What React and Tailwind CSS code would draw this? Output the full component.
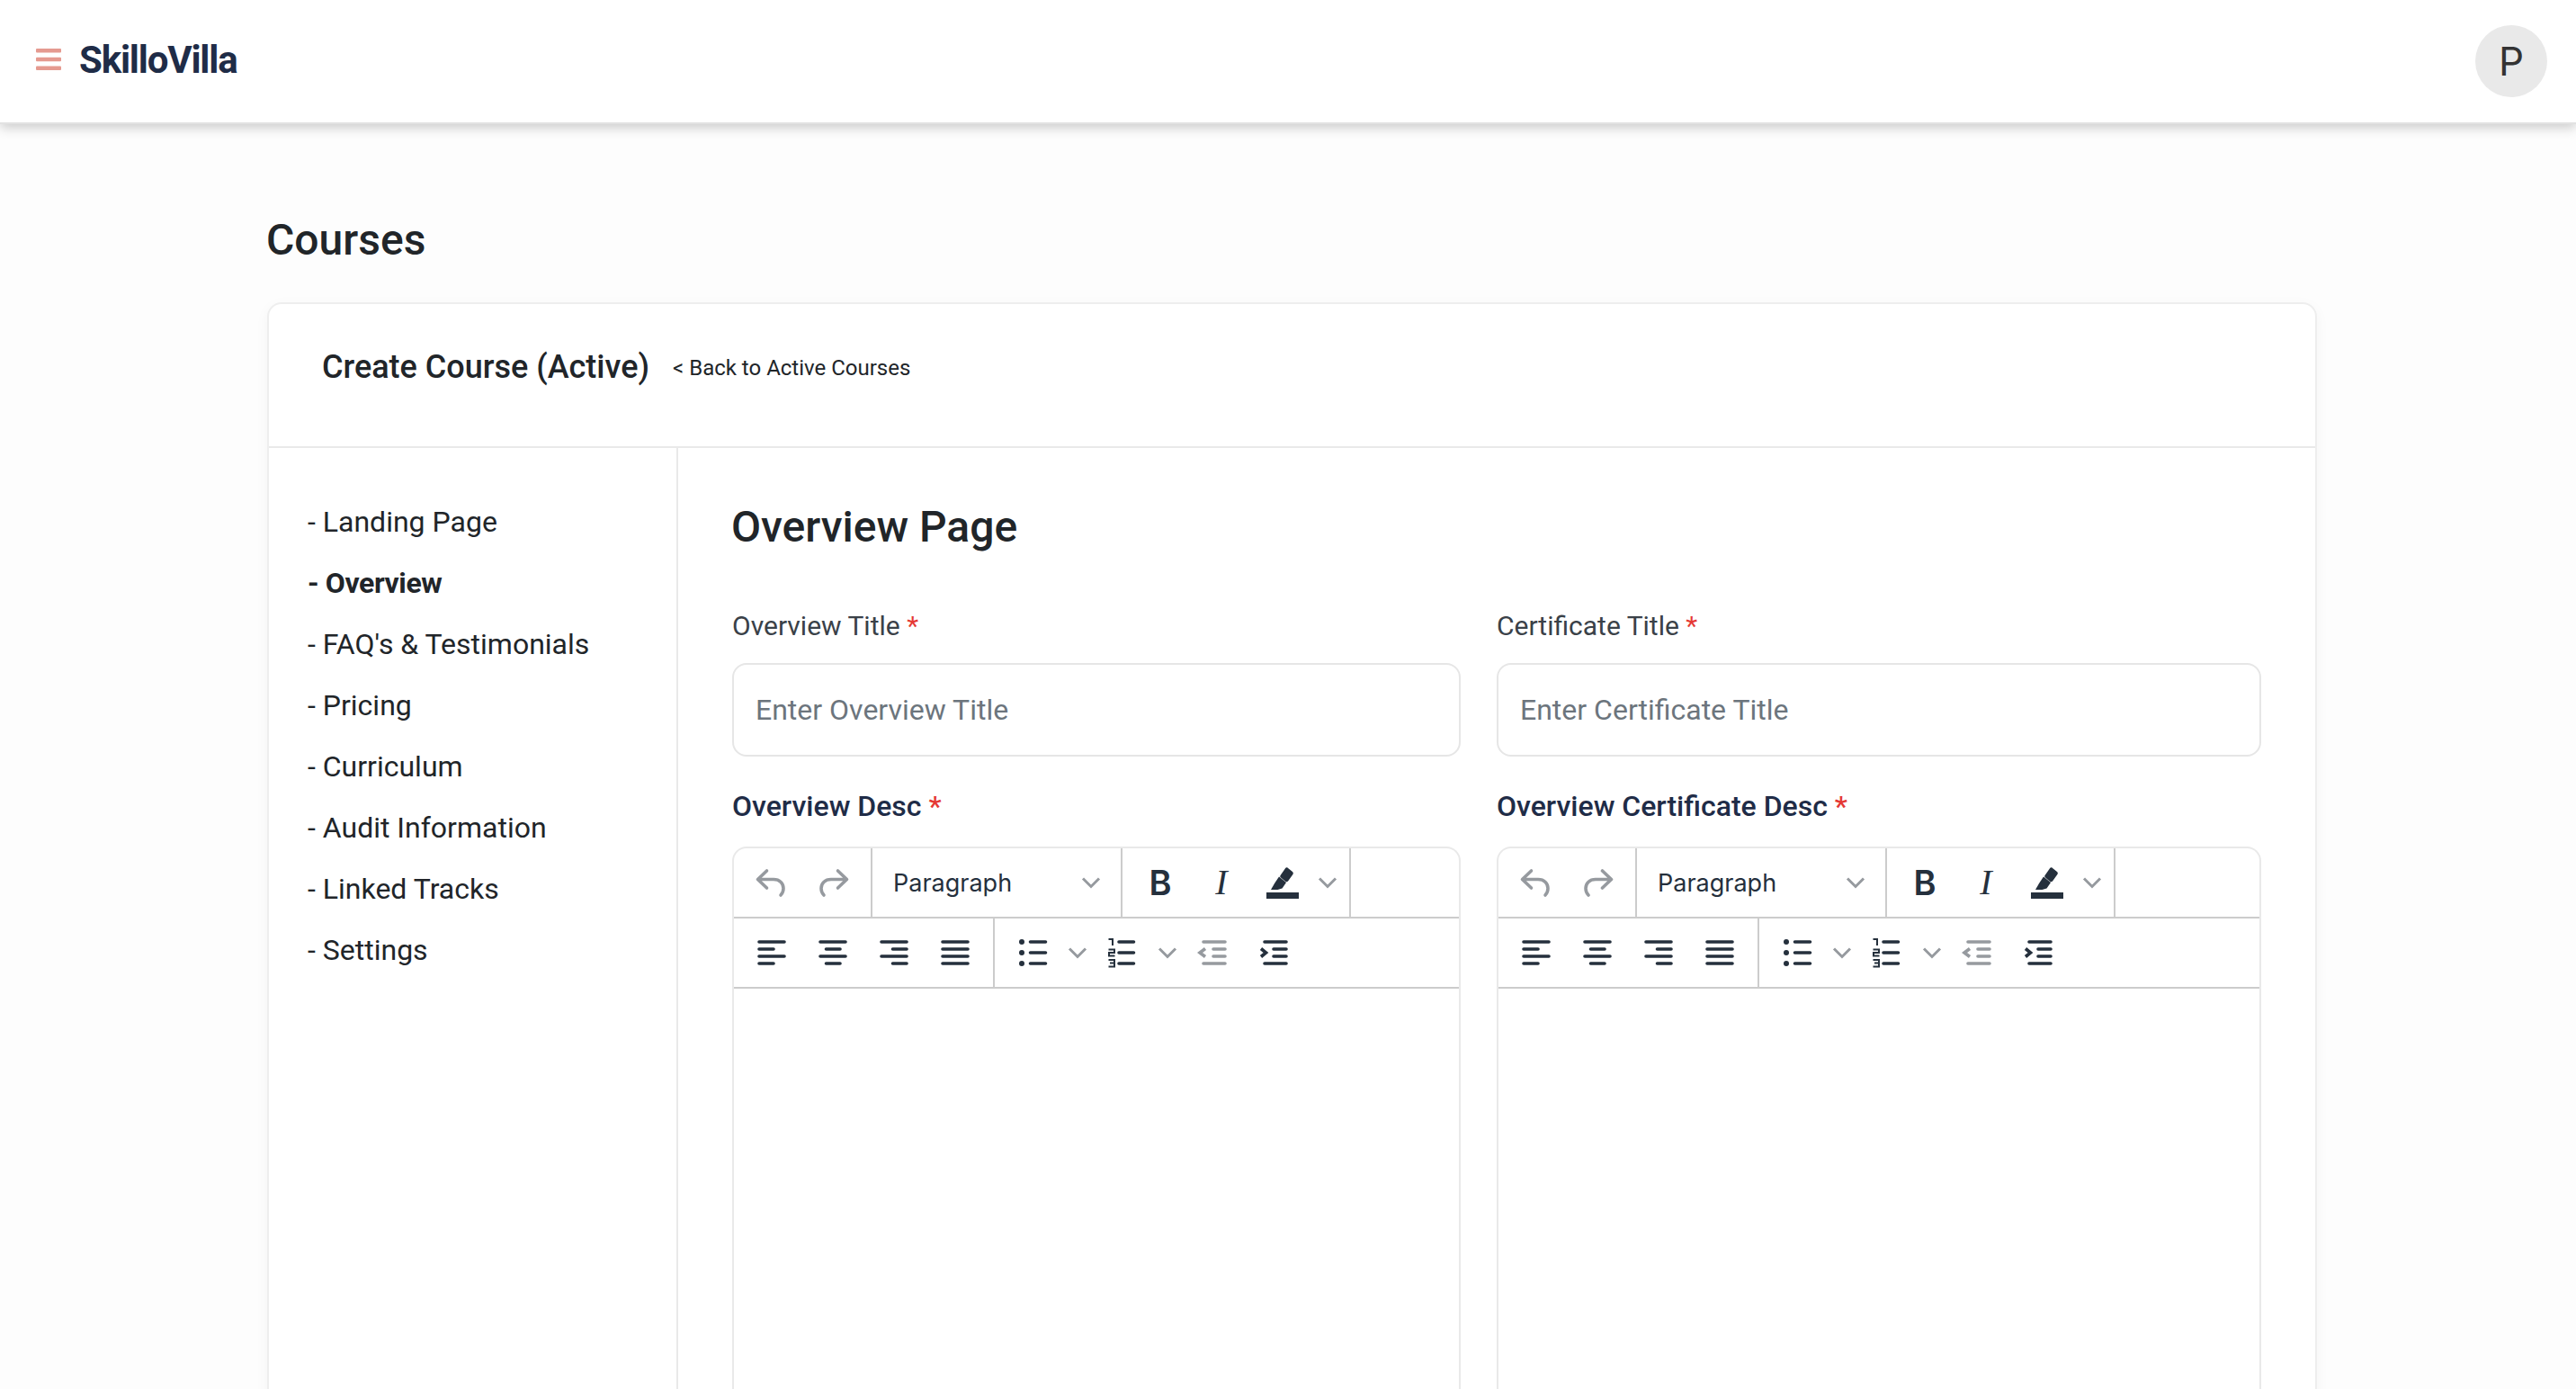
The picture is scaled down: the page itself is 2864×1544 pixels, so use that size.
import React from 'react';

const navItems = ['- Landing Page', '- Overview', "- FAQ's & Testimonials", '- Pricing', '- Curriculum', '- Audit Information', '- Linked Tracks', '- Settings'];

const Chevron = () => (
    <svg width="22" height="14" viewBox="0 0 22 14" fill="none" stroke="#969a9f" strokeWidth="3">
        <path d="M2 2.5l9 9 9-9" />
    </svg>
);

const Bars = ({ lines, color = '#25303d' }) => (
    <svg width="36" height="36" viewBox="0 0 36 36" fill="none" stroke={color} strokeWidth="3.6" strokeLinecap="round">
        {lines.map((l, i) => (
            <path key={i} d={`M${l[0]} ${l[2]}H${l[1]}`} />
        ))}
    </svg>
);

const Undo = ({ flip }) => (
    <svg width="36" height="36" viewBox="0 0 36 36" fill="none" stroke="#969a9f" strokeWidth="3.6" strokeLinecap="round" strokeLinejoin="round" className={flip ? '-scale-x-100' : ''}>
        <path d="M13.5 5L3.5 14.5L13.5 24M4 14.5H21C28 14.5 32 19 32 24.5C32 27.5 31 30 29 32" />
    </svg>
);

const BulletList = () => (
    <svg width="36" height="36" viewBox="0 0 36 36" fill="none">
        <circle cx="6" cy="6" r="3" fill="#25303d" />
        <circle cx="6" cy="18" r="3" fill="#25303d" />
        <circle cx="6" cy="30" r="3" fill="#25303d" />
        <path d="M15.5 6H32.5M15.5 18H32.5M15.5 30H32.5" stroke="#25303d" strokeWidth="3.6" strokeLinecap="round" />
    </svg>
);

const NumberList = () => (
    <svg width="36" height="36" viewBox="0 0 36 36" fill="none" stroke="#25303d">
        <path d="M3.5 3H8V10M3.5 14.5H10V18H4V21.5H10.5M3.5 26H10V29.5H5M10 29.5V33.5H3.5" strokeWidth="2" />
        <path d="M15 6H31.5M15 18H31.5M15 30H31.5" strokeWidth="3.6" strokeLinecap="round" />
    </svg>
);

const IndentIcon = ({ outdent }) => {
    const color = outdent ? '#969a9f' : '#25303d';
    return (
        <svg width="36" height="36" viewBox="0 0 36 36" fill="none" stroke={color} strokeWidth="3.6" strokeLinecap="round">
            {outdent ? (
                <>
                    <path d="M8 6H32M19 14H32M19 22H32M8 30H32" />
                    <path d="M10 13.5L4 18L10 22.5" strokeLinecap="butt" />
                </>
            ) : (
                <>
                    <path d="M7 6H31M17 14H31M17 22H31M7 30H31" />
                    <path d="M3 13.5L8.5 18L3 22.5" strokeLinecap="butt" />
                </>
            )}
        </svg>
    );
};

const Highlight = () => (
    <svg width="36" height="36" viewBox="0 0 36 36" fill="#25303d">
        <path d="M21 2.2C21.7 1.2 22.8 1 23.7 1.7L29 6C29.9 6.8 30.1 7.9 29.4 8.9L24 16.5C23.3 17.4 22.2 17.5 21.4 16.9L16 12.6C15.1 11.9 15 10.8 15.6 9.9Z" />
        <path d="M14 11.5L22 18L17.5 24.5L12.5 26H5L9 19Z" />
        <rect x="0" y="29" width="36" height="7" />
    </svg>
);

const Btn = ({ children, w = 'w-[68px]' }) => <div className={`${w} h-full flex items-center justify-center`}>{children}</div>;

const Editor = () => (
    <div className="mt-[25px] rounded-t-[16px] border-x-2 border-t-2 border-[#e9e9e9] h-[700px] overflow-hidden bg-white">
        <div className="h-[76px] flex border-b-2 border-[#cccccc] box-content">
            <div className="flex items-center h-full w-[154px] shrink-0 pl-[6px] border-r-2 border-[#cccccc]">
                <Btn w="w-[70px]"><Undo /></Btn>
                <Btn w="w-[70px]"><Undo flip /></Btn>
            </div>
            <div className="flex items-center justify-between h-full w-[278px] shrink-0 pl-[23px] pr-[22px] border-r-2 border-[#cccccc]">
                <span className="text-[27px] mt-[2px] text-[#25303d] font-['Inter',sans-serif]">Paragraph</span>
                <Chevron />
            </div>
            <div className="flex items-center h-full w-[254px] shrink-0 pl-[8px] border-r-2 border-[#cccccc]">
                <Btn><span className="text-[38px] font-semibold text-[#25303d] font-['Inter',sans-serif]">B</span></Btn>
                <Btn><span className="text-[40px] italic text-[#25303d] font-['Liberation_Serif',serif]">I</span></Btn>
                <Btn><Highlight /></Btn>
                <div className="ml-[5px]"><Chevron /></div>
            </div>
        </div>
        <div className="h-[76px] flex border-b-2 border-[#cccccc] box-content">
            <div className="flex items-center h-full w-[290px] shrink-0 pl-[8px] border-r-2 border-[#cccccc]">
                <Btn><Bars lines={[[4, 32, 6], [4, 20, 14], [4, 32, 22], [4, 20, 30]]} /></Btn>
                <Btn><Bars lines={[[4, 32, 6], [10.5, 26, 14], [4, 32, 22], [10.5, 26, 30]]} /></Btn>
                <Btn><Bars lines={[[4, 32, 6], [16.5, 32, 14], [4, 32, 22], [16.5, 32, 30]]} /></Btn>
                <Btn><Bars lines={[[4, 32, 6], [4, 32, 14], [4, 32, 22], [4, 32, 30]]} /></Btn>
            </div>
            <div className="flex items-center h-full pl-[24px]">
                <BulletList />
                <div className="ml-[21px]"><Chevron /></div>
                <div className="ml-[20px]"><NumberList /></div>
                <div className="ml-[22px]"><Chevron /></div>
                <div className="ml-[21px]"><IndentIcon outdent /></div>
                <div className="ml-[33px]"><IndentIcon /></div>
            </div>
        </div>
    </div>
);

const Field = ({ label, placeholder }) => (
    <div>
        <label className="block text-[30px] leading-[40px] text-[#3a4148]">
            {label} <span className="text-[#e53935]">*</span>
        </label>
        <div className="mt-[21px] h-[104px] flex items-center px-[24px] rounded-[16px] border-2 border-[#e6e6e6] bg-white text-[32px] text-[#6c757d]">
            {placeholder}
        </div>
    </div>
);

const App = () => {
    return (
        <div className="h-screen overflow-hidden bg-[#fdfdfd] font-['Roboto',sans-serif] text-[#212529]">
            <header className="h-[138px] bg-white border-b-2 border-[#e2e2e2] shadow-[0_4px_12px_rgba(0,0,0,0.2)] flex items-center justify-between pl-[40px] pr-[32px]">
                <div className="flex items-center mb-[4px]">
                    <svg width="28" height="24" viewBox="0 0 28 24" fill="#e59a90">
                        <rect x="0" y="0" width="28" height="4.5" rx="1" />
                        <rect x="0" y="9.75" width="28" height="4.5" rx="1" />
                        <rect x="0" y="19.5" width="28" height="4.5" rx="1" />
                    </svg>
                    <span className="ml-[20px] text-[42px] font-bold tracking-[-1.2px] text-[#1f2c47]">SkilloVilla</span>
                </div>
                <div className="w-20 h-20 rounded-full bg-[#e9e9e9] flex items-center justify-center text-[44px] text-[#333333] font-['Inter',sans-serif]">P</div>
            </header>

            <main className="pl-[297px] pr-[288px] pt-[96px]">
                <h1 className="text-[48px] leading-[66px] font-medium -ml-px">Courses</h1>

                <div className="mt-[36px] bg-white border-2 border-[#eeeeee] rounded-[16px] shadow-[0_4px_16px_rgba(0,0,0,0.04)]">
                    <div className="h-[160px] flex items-center pl-[59px] pb-[19px] border-b-2 border-[#e9e9e9]">
                        <h2 className="text-[36px] font-medium">Create Course (Active)</h2>
                        <a className="ml-[26px] text-[24px] mt-[2px]">&lt; Back to Active Courses</a>
                    </div>

                    <div className="flex">
                        <nav className="w-[455px] shrink-0 border-r-2 border-[#e9e9e9] pl-[43px] pt-[48px] h-[1200px]">
                            {navItems.map((item) => (
                                <div key={item} className={`h-[68px] text-[32px] leading-[68px] ${item === '- Overview' ? 'font-bold tracking-[-0.4px]' : ''}`}>{item}</div>
                            ))}
                        </nav>

                        <div className="flex-1 pl-[60px] pr-[60px] pt-[56px]">
                            <h3 className="text-[48px] leading-[64px] font-medium -ml-px">Overview Page</h3>
                            <div className="mt-[58px] grid grid-cols-[810px_850px] gap-x-[40px]">
                                <Field label="Overview Title" placeholder="Enter Overview Title" />
                                <Field label="Certificate Title" placeholder="Enter Certificate Title" />
                                <div className="mt-[35px]">
                                    <label className="block text-[32px] leading-[40px] font-medium text-[#1f2c47]">Overview Desc <span className="text-[#e53935]">*</span></label>
                                    <Editor />
                                </div>
                                <div className="mt-[35px]">
                                    <label className="block text-[32px] leading-[40px] font-medium text-[#1f2c47]">Overview Certificate Desc <span className="text-[#e53935]">*</span></label>
                                    <Editor />
                                </div>
                            </div>
                        </div>
                    </div>
                </div>
            </main>
        </div>
    );
};

export default App;
